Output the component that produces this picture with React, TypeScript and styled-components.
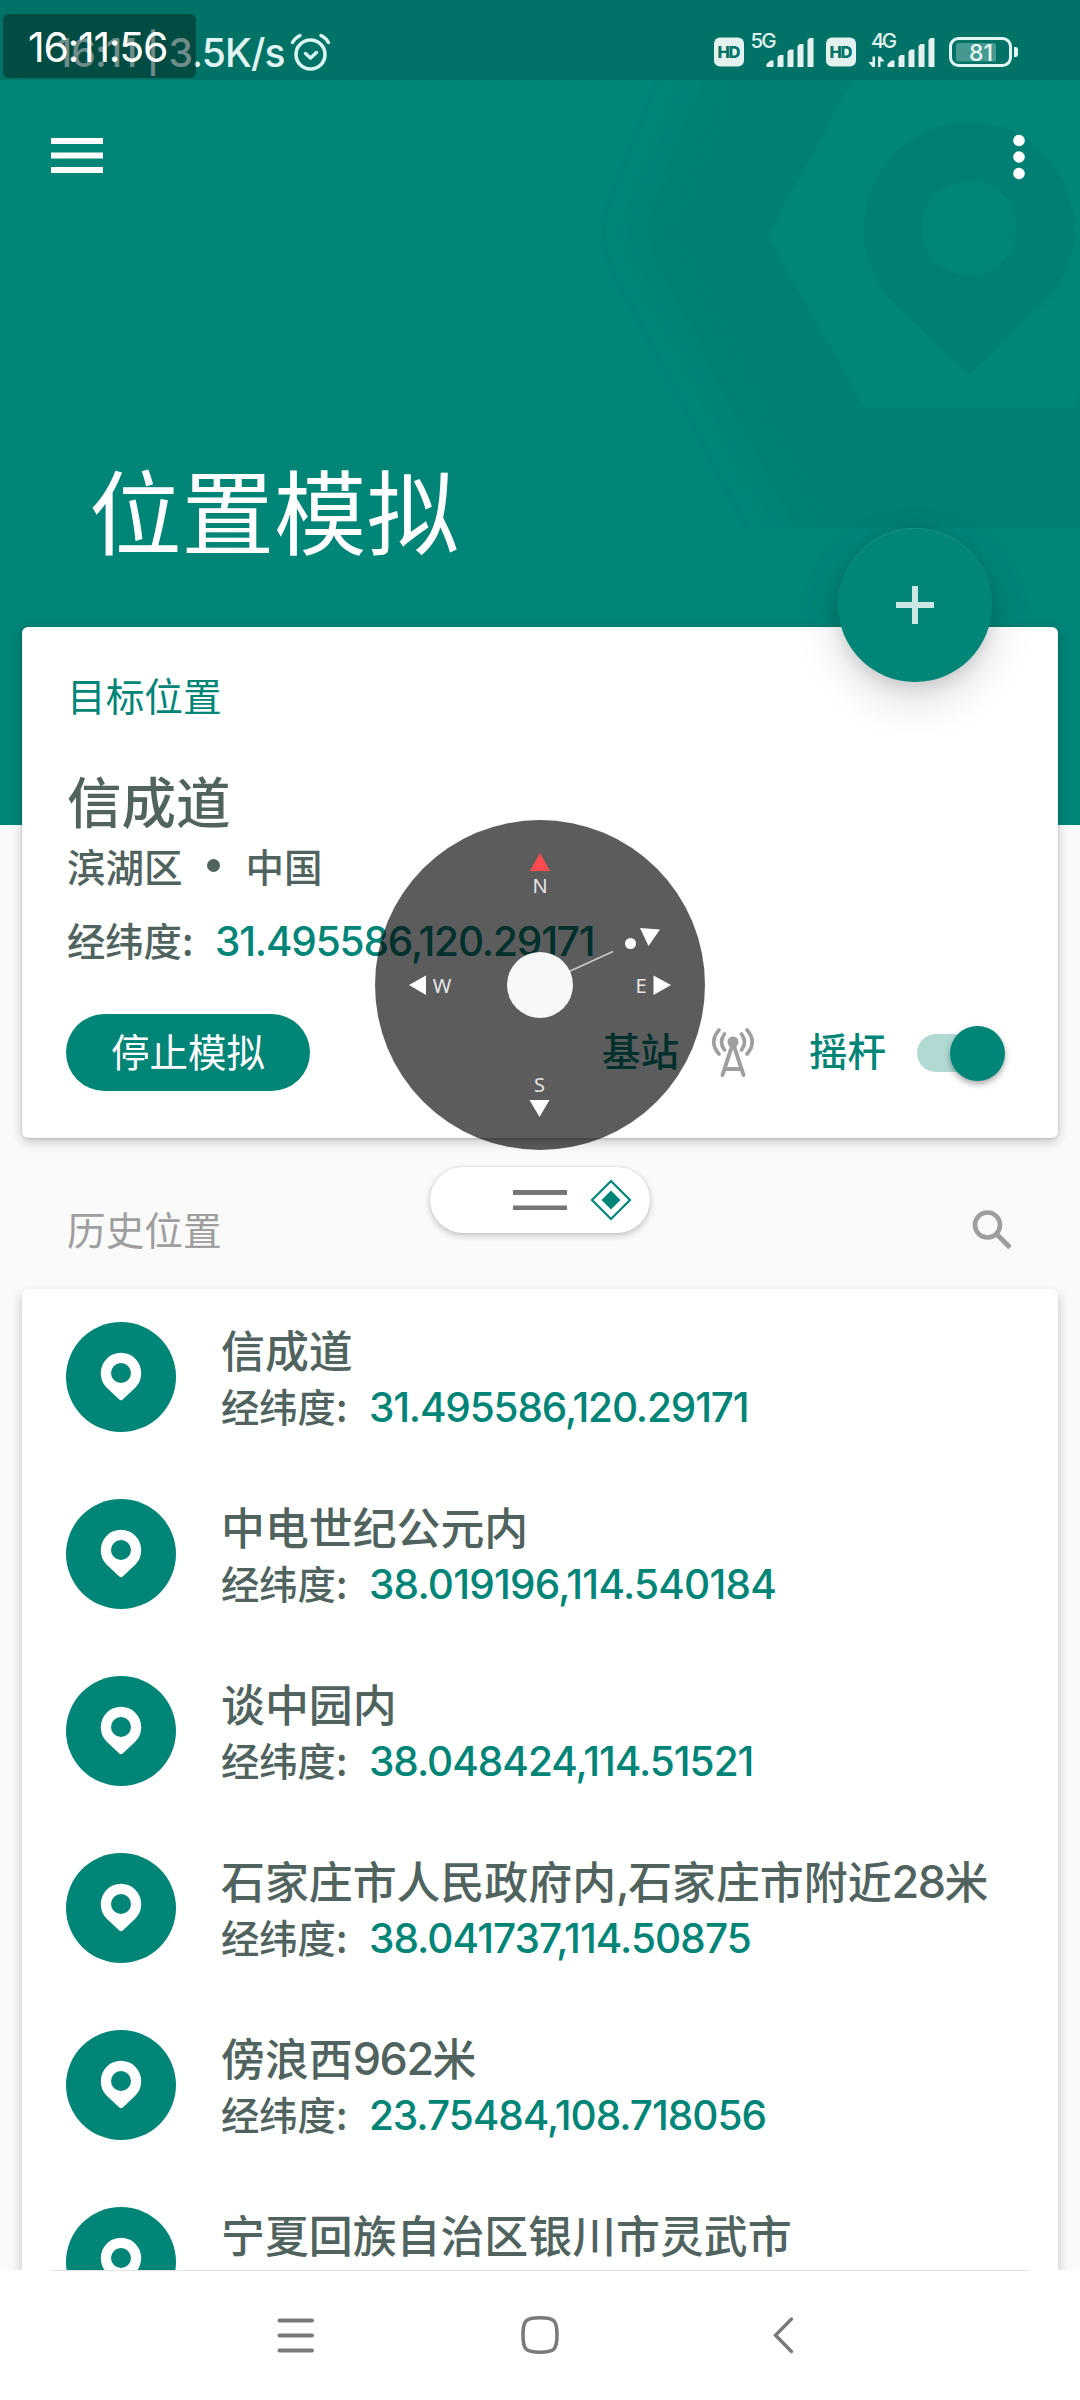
import React from "react";
import styled, { createGlobalStyle } from "styled-components";

const GREEN = "#008577";
const INK = "#50635f";
const CJK = `"Noto Sans CJK SC", sans-serif`;
const LATIN = `Inter, "Noto Sans CJK SC", sans-serif`;

const GlobalStyle = createGlobalStyle`
  * { box-sizing: border-box; }
  body { margin: 0; background: #fafafa; }
`;

const Screen = styled.div`
  position: relative;
  width: 1080px;
  height: 2400px;
  overflow: hidden;
  display: flex;
  flex-direction: column;
  background: #fafafa;
  font-family: ${CJK};
  white-space: nowrap;
`;

const Hero = styled.header`
  position: relative;
  height: 825px;
  flex: none;
  display: flex;
  flex-direction: column;
  background: ${GREEN};
`;

const HeroArt = styled.svg`
  position: absolute;
  top: 0;
  right: 0;
`;

const StatusBar = styled.div`
  position: relative;
  height: 80px;
  flex: none;
  display: flex;
  justify-content: space-between;
  padding: 0 60px 0 56px;
  background: #007266;
  color: #e0f5f2;
`;

const StatusGroup = styled.div`
  display: flex;
  align-items: flex-start;
`;

const NetSpeed = styled.span`
  font: 500 39px/46px ${LATIN};
  letter-spacing: -0.85px;
  margin-top: 30px;
  width: 234px;
`;

const AlarmIcon = styled.svg`
  margin-top: 32px;
`;

const ClockOverlay = styled.div`
  position: absolute;
  z-index: 10;
  left: 3px;
  top: 14px;
  width: 193px;
  height: 64px;
  padding-left: 25px;
  border-radius: 6px;
  background: rgba(0, 36, 30, 0.5);
  color: #fff;
  font: 400 41px/66px ${LATIN};
  letter-spacing: -1.3px;
`;

const Toolbar = styled.div`
  position: relative;
  display: flex;
  justify-content: space-between;
  padding: 48px 49px 0 51px;
`;

const Title = styled.h1`
  position: relative;
  margin: 264px 0 0 89px;
  color: #fff;
  font: 400 92.5px/112px ${CJK};
`;

const Body = styled.main`
  position: relative;
  display: flex;
  flex-direction: column;
  margin: -198px 22px 0;
`;

const Card = styled.section`
  position: relative;
  height: 511px;
  flex: none;
  display: flex;
  flex-direction: column;
  padding: 41px 54px 0 45px;
  border-radius: 6px;
  background: #fff;
  box-shadow: 0 4px 12px rgba(0, 0, 0, 0.2), 0 1px 3px rgba(0, 0, 0, 0.16);
`;

const Fab = styled.button`
  position: absolute;
  right: 66px;
  top: -99px;
  width: 154px;
  height: 154px;
  display: flex;
  align-items: center;
  justify-content: center;
  padding: 0;
  border: 0;
  border-radius: 50%;
  background: ${GREEN};
  box-shadow: 0 18px 44px rgba(0, 0, 0, 0.15), 0 4px 16px rgba(0, 0, 0, 0.12), inset 0 1px 0 rgba(255, 255, 255, 0.1);
`;

const Label = styled.div<{ $color: string }>`
  color: ${(p) => p.$color};
  font: 400 38.7px/52px ${CJK};
`;

const Place = styled.div`
  margin-top: 43px;
  color: ${INK};
  font: 500 54.5px/74px ${CJK};
`;

const Region = styled.div`
  display: flex;
  align-items: center;
  height: 52px;
  margin-top: 2px;
  color: ${INK};
  font: 500 38.5px/52px ${CJK};
`;

const Bullet = styled.i`
  width: 13px;
  height: 13px;
  margin: 0 26px 0 24px;
  border-radius: 50%;
  background: ${INK};
`;

const CoordRow = styled.div<{ $top: number }>`
  display: flex;
  align-items: center;
  height: 52px;
  margin-top: ${(p) => p.$top}px;
  color: ${INK};
  font: 500 38.3px/52px ${CJK};
`;

const Colon = styled.span`
  width: 33px;
`;

const Coord = styled.span<{ $ls: number }>`
  padding-top: 4px;
  color: ${GREEN};
  font: 500 40.5px/52px ${LATIN};
  letter-spacing: ${(p) => p.$ls}px;
`;

const Actions = styled.div`
  display: flex;
  align-items: center;
  height: 77px;
  margin-top: 48px;
  margin-left: -1px;
  padding-right: 10px;
`;

const StopButton = styled.button`
  width: 244px;
  height: 77px;
  margin-right: auto;
  padding: 0 0 6px;
  border: 0;
  border-radius: 39px;
  background: ${GREEN};
  color: #fff;
  font: 400 38.5px/70px ${CJK};
`;

const ActionLabel = styled.span`
  color: ${GREEN};
  font: 500 38.5px/71px ${CJK};
  height: 77px;
`;

const TowerIcon = styled.svg`
  margin: 0 54px 0 32px;
`;

const Switch = styled.div`
  position: relative;
  width: 77px;
  height: 38px;
  margin-left: 31px;
  border-radius: 19px;
  background: #b2dad5;
`;

const Thumb = styled.i`
  position: absolute;
  left: 33px;
  top: -8px;
  width: 55px;
  height: 55px;
  border-radius: 50%;
  background: ${GREEN};
  box-shadow: 0 3px 6px rgba(0, 0, 0, 0.35);
`;

const HistoryHeader = styled.div`
  display: flex;
  align-items: center;
  justify-content: space-between;
  height: 151px;
  padding: 28px 44px 0 45px;
`;

const SearchIcon = styled.svg`
  margin-top: 4px;
`;

const HistoryList = styled.ul`
  margin: 0;
  padding: 33px 44px 0;
  height: 981px;
  overflow: hidden;
  list-style: none;
  border-radius: 6px 6px 0 0;
  background: #fff;
  box-shadow: 0 6px 12px rgba(0, 0, 0, 0.24);
`;

const Item = styled.li`
  display: flex;
  height: 177px;
`;

const PinBadge = styled.span`
  width: 110px;
  height: 110px;
  flex: none;
  display: flex;
  align-items: center;
  justify-content: center;
  border-radius: 50%;
  background: ${GREEN};
`;

const ItemText = styled.div`
  display: flex;
  flex-direction: column;
  padding-left: 45px;
  margin-top: -3px;
`;

const ItemTitle = styled.div`
  display: flex;
  height: 61px;
  color: ${INK};
  font: 500 43.9px/60px ${CJK};
`;

const TitleNumber = styled.span`
  padding-top: 2px;
  font-family: ${LATIN};
  font-size: 45px;
  letter-spacing: -1.5px;
`;

const NavBar = styled.nav`
  position: absolute;
  left: 0;
  right: 0;
  bottom: 0;
  height: 130px;
  display: flex;
  justify-content: center;
  align-items: center;
  gap: 204px;
  background: #fff;
`;

const NavLine = styled.i`
  position: absolute;
  top: 0;
  left: 52px;
  right: 52px;
  height: 1px;
  background: #e2e2e2;
`;

const Joystick = styled.svg`
  position: absolute;
  left: 375px;
  top: 820px;
`;

const HandlePill = styled.div`
  position: absolute;
  left: 430px;
  top: 1167px;
  width: 220px;
  height: 66px;
  border-radius: 33px;
  background: #fff;
  box-shadow: 0 3px 7px rgba(0, 0, 0, 0.2), 0 0 3px rgba(0, 0, 0, 0.12);
  display: flex;
  align-items: center;
  padding-left: 83px;
  gap: 23px;
`;

const Bars = () => (
  <path
    fill="#e3f1ef"
    d="M0 30v-3l4-3.500h3V30zM11 30V20l2-2h4v12zM21 30V14.500l2-2h4V30zM31 30V9l2-2h4v23zM41 30V3l2-2h4v29z"
  />
);

const SvgText = styled.text<{ $size: number; $weight: number }>`
  font-family: ${LATIN};
  font-size: ${(p) => p.$size}px;
  font-weight: ${(p) => p.$weight};
`;

const CompassText = styled.text`
  font-family: "Noto Sans", sans-serif;
  font-size: 20px;
  font-weight: 400;
  fill: #e6e6e6;
  text-anchor: middle;
`;

const StatusIcons = () => (
  <svg width="310" height="80" viewBox="710 0 310 80">
    {[714, 826].map((x) => (
      <g key={x}>
        <rect x={x} y="37.500" width="30" height="29" rx="6" fill="#e3f1ef" />
        <SvgText $size={16.5} $weight={800} x={x + 15} y="58" textAnchor="middle" fill="#007266" textLength="23">HD</SvgText>
      </g>
    ))}
    <SvgText $size={20.5} $weight={500} x="750.500" y="48" fill="#e3f1ef" textLength="26">5G</SvgText>
    <g transform="translate(766.500 37)"><Bars /></g>
    <SvgText $size={20.5} $weight={500} x="871" y="48" fill="#e3f1ef" textLength="26">4G</SvgText>
    <g transform="translate(887.500 37)"><Bars /></g>
    <path d="M875 56.500v10.500h-2.500L868.500 62h4v-5.500zM878 67V56.500h2.500l4 5h-4V67z" fill="#e3f1ef" />
    <rect x="950.500" y="38.500" width="60" height="27" rx="8" fill="none" stroke="#e0f5f2" strokeWidth="3" />
    <rect x="956" y="43" width="40" height="18.500" rx="2" fill="#45998e" />
    <path d="M1014 47h1.500q2.500 0 2.500 2.500v5q0 2.500-2.500 2.500h-1.500z" fill="#e0f5f2" />
    <SvgText $size={23} $weight={500} x="969" y="60.500" fill="#e8f8f6" textLength="24">81</SvgText>
  </svg>
);

const HexBackdrop = () => (
  <HeroArt width="480" height="560" viewBox="600 0 480 560">
    <defs>
      <filter id="soft" x="-20%" y="-20%" width="140%" height="140%">
        <feGaussianBlur stdDeviation="16" />
      </filter>
      <clipPath id="ringBottom"><rect x="600" y="0" width="480" height="528" /></clipPath>
    </defs>
    <g clipPath="url(#ringBottom)">
      <path d="M730 0L636 234L806 560H1200V0z" fill="#007f72" filter="url(#soft)" />
    </g>
    <path d="M897 0L768 236L865 408H1072L1080 396V0z" fill={GREEN} />
    <path
      fillRule="evenodd"
      d="M969 122A105 105 0 0 1 1074 229C1074 262 1062 285 1045 302L969 375L893 302C876 285 864 262 864 229A105 105 0 0 1 969 122zM969 181a47 47 0 1 0 0.100 0z"
      fill="#007f72"
    />
  </HeroArt>
);

const PinIcon = () => (
  <svg width="42" height="50" viewBox="0 0 42 50">
    <path
      fillRule="evenodd"
      fill="#fff"
      d="M21 .8A20.200 20.200 0 0 0 .8 21C.8 27.500 3.500 32.500 7 36L19.300 47.600Q21 49 22.700 47.600L35 36C38.500 32.500 41.200 27.500 41.200 21A20.200 20.200 0 0 0 21 .8zM21 11a10 10 0 1 1 0 20a10 10 0 1 1 0-20z"
    />
  </svg>
);

type Entry = { title: React.ReactNode; coord?: string; ls?: number };

const entries: Entry[] = [
  { title: "信成道", coord: "31.495586,120.29171", ls: -1.15 },
  { title: "中电世纪公元内", coord: "38.019196,114.540184", ls: -0.75 },
  { title: "谈中园内", coord: "38.048424,114.51521", ls: -1.0 },
  {
    title: (
      <>石家庄市人民政府内<TitleNumber>,</TitleNumber>石家庄市附近<TitleNumber>28</TitleNumber>米</>
    ),
    coord: "38.041737,114.50875",
    ls: -0.92,
  },
  { title: <>傍浪西<TitleNumber>962</TitleNumber>米</>, coord: "23.75484,108.718056", ls: -1.0 },
  { title: "宁夏回族自治区银川市灵武市" },
];

const CoordLine = ({ value, ls, top }: { value: string; ls: number; top: number }) => (
  <CoordRow $top={top}>
    经纬度<Colon>:</Colon>
    <Coord $ls={ls}>{value}</Coord>
  </CoordRow>
);

export default function App() {
  return (
    <Screen>
      <GlobalStyle />
      <ClockOverlay>16:11:56</ClockOverlay>
      <Hero>
        <HexBackdrop />
        <StatusBar>
          <StatusGroup>
            <NetSpeed>16:11 | 3.5K/s</NetSpeed>
            <AlarmIcon width="42" height="42" viewBox="0 0 42 42" fill="none" stroke="#d9f5f1" strokeLinecap="round">
              <circle cx="20.500" cy="22.500" r="14.500" strokeWidth="3.600" />
              <path d="M15.500 21.500l5 4.500l6-5.500" strokeWidth="3.500" strokeLinejoin="round" />
              <path d="M2.500 10.500Q5 6 10 3.500M31 3.500Q36 6 38.500 10.500" strokeWidth="3.500" />
            </AlarmIcon>
          </StatusGroup>
          <StatusIcons />
        </StatusBar>
        <Toolbar>
          <svg width="52" height="60" viewBox="0 0 52 60" fill="#fff">
            <path d="M0 10h52v6H0zM0 24.500h52v6H0zM0 39h52v6H0z" />
          </svg>
          <svg width="24" height="60" viewBox="0 0 24 60" fill="#fff">
            <circle cx="12" cy="12.500" r="5.800" />
            <circle cx="12" cy="29" r="5.800" />
            <circle cx="12" cy="45.500" r="5.800" />
          </svg>
        </Toolbar>
        <Title>位置模拟</Title>
      </Hero>

      <Body>
        <Card>
          <Fab>
            <svg width="38" height="38" viewBox="0 0 38 38" fill="#cce7e4">
              <path d="M16 0h6v16h16v6H22v16h-6V22H0v-6h16z" />
            </svg>
          </Fab>
          <Label $color={GREEN}>目标位置</Label>
          <Place>信成道</Place>
          <Region>滨湖区<Bullet />中国</Region>
          <CoordLine value="31.495586,120.29171" ls={-1.15} top={23} />
          <Actions>
            <StopButton>停止模拟</StopButton>
            <ActionLabel>基站</ActionLabel>
            <TowerIcon width="44" height="52" viewBox="0 0 44 52" fill="none" stroke="#9e9e9e" strokeWidth="4" strokeLinecap="round">
              <circle cx="22" cy="15" r="5.500" fill="#9e9e9e" stroke="none" />
              <path d="M22 16L11.500 48M22 16L32.500 48M15.500 42H28.500" />
              <path d="M13.500 7Q7.500 15 13.500 23M30.500 7Q36.500 15 30.500 23M8 3Q-2.500 15 8 27M36 3Q46.500 15 36 27" strokeWidth="3.600" />
            </TowerIcon>
            <ActionLabel>摇杆</ActionLabel>
            <Switch><Thumb /></Switch>
          </Actions>
        </Card>

        <HistoryHeader>
          <Label $color="#9e9e9e">历史位置</Label>
          <SearchIcon width="44" height="44" viewBox="0 0 44 44" fill="none" stroke="#9e9e9e">
            <circle cx="17.500" cy="17" r="12.500" strokeWidth="4.600" />
            <path d="M26.500 26L40 39.500" strokeWidth="5" />
          </SearchIcon>
        </HistoryHeader>

        <HistoryList>
          {entries.map((e, i) => (
            <Item key={i}>
              <PinBadge><PinIcon /></PinBadge>
              <ItemText>
                <ItemTitle>{e.title}</ItemTitle>
                {e.coord && <CoordLine value={e.coord} ls={e.ls ?? 0} top={0} />}
              </ItemText>
            </Item>
          ))}
        </HistoryList>
      </Body>

      <NavBar>
        <NavLine />
        <svg width="40" height="40" viewBox="0 0 40 40" stroke="#7a7a7a" strokeWidth="4" strokeLinecap="round">
          <path d="M3.500 5.500H36M3.500 20.500H36M3.500 35.500H36" />
        </svg>
        <svg width="40" height="40" viewBox="0 0 40 40" fill="none" stroke="#7a7a7a" strokeWidth="3.600">
          <path d="M20 2.800C34 2.800 37 5 37 20C37 35 34 37.200 20 37.200C6 37.200 3 35 3 20C3 5 6 2.800 20 2.800z" />
        </svg>
        <svg width="40" height="40" viewBox="0 0 40 40" fill="none" stroke="#7a7a7a" strokeWidth="3.400" strokeLinecap="round" strokeLinejoin="miter">
          <path d="M27.500 4L11.500 20.200L27.500 36.500" />
        </svg>
      </NavBar>

      <Joystick width="330" height="330" viewBox="375 820 330 330">
        <circle cx="540" cy="985" r="165" fill="rgba(0,0,0,0.64)" />
        <path d="M568 972L613 951.500" stroke="#ccc" strokeWidth="1.500" />
        <circle cx="540" cy="985" r="33" fill="#f7f7f7" />
        <path d="M540 853L550 871H530z" fill="#ff4b4f" />
        <g fill="#fff">
          <path d="M409 985L426 975.500V995z" />
          <path d="M671 985L653.500 975.500V995z" />
          <path d="M529.500 1100H549.500L539.500 1117z" />
          <circle cx="630.500" cy="943.500" r="5.500" />
          <path d="M640 928L660 929.500L648.500 946z" />
        </g>
        <CompassText x="540" y="893">N</CompassText>
        <CompassText x="442" y="992.500">W</CompassText>
        <CompassText x="641" y="992.500">E</CompassText>
        <CompassText x="539.500" y="1091.500">S</CompassText>
      </Joystick>

      <HandlePill>
        <svg width="54" height="20" viewBox="0 0 54 20" fill="#757575">
          <path d="M0 0h54v5H0zM0 15.500h54v5H0z" />
        </svg>
        <svg width="42" height="42" viewBox="0 0 42 42">
          <path d="M21 2L40 21L21 40L2 21z" fill="none" stroke={GREEN} strokeWidth="2.200" />
          <path d="M21 11.500L30.500 21L21 30.500L11.500 21z" fill={GREEN} />
        </svg>
      </HandlePill>
    </Screen>
  );
}
